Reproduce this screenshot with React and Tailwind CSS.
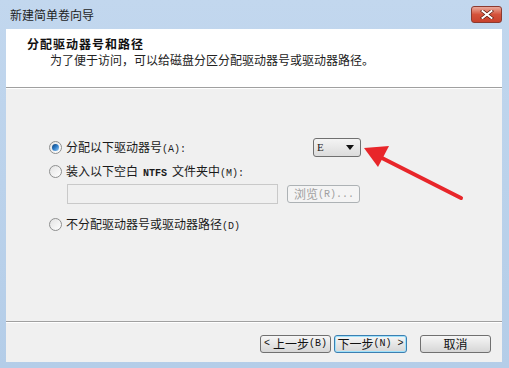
import React from "react";

const font = { fontFamily: '"Noto Sans CJK SC", "Liberation Sans", sans-serif' };

// half-width latin parts, SimSun-like 6px advance
const A = ({ children, className = "" }) => (
    <span className={"font-['Liberation_Mono'] text-[10px] " + className}>{children}</span>
);

const Radio = ({ checked }) => (
    <span className="relative flex h-[13px] w-[13px] shrink-0 items-center justify-center rounded-full border border-[#8e8f8f] bg-gradient-to-br from-[#e3e3e3] to-[#ffffff]">
        {checked && (
            <span className="h-[7px] w-[7px] rounded-full bg-gradient-to-br from-[#0c3f75] via-[#2d7cc8] to-[#9ad0f5]" />
        )}
    </span>
);

const WinButton = ({ children, primary, className = "" }) => (
    <button
        className={
            "flex h-[18px] items-center justify-center rounded-[3px] border text-[12px] leading-none text-[#111] bg-gradient-to-b from-[#f6f6f6] via-[#e6e6e6] to-[#d6d6d6] " +
            (primary ? "border-[#3c7fb1] shadow-[inset_0_0_0_1px_#9ee1fb] " : "border-[#707070] ") +
            className
        }
    >
        {children}
    </button>
);

export default function App() {
    return (
        <div
            className="relative flex h-[368px] w-[509px] flex-col overflow-hidden bg-gradient-to-b from-[#c2d7ee] to-[#b4cde8]"
            style={font}
        >
            <div className="flex h-[29px] shrink-0 items-center justify-between pl-[10px] pr-[7px]">
                <span className="text-[12px] text-[#1e1e1e]">新建简单卷向导</span>
                <div className="flex h-[17px] w-[31px] items-center justify-center rounded-[3px] border border-[#8b3a30] bg-gradient-to-b from-[#e9a99c] via-[#d4523b] to-[#c8412d]">
                    <svg width="14" height="9" viewBox="0 0 14 9">
                        <path d="M2.5 1 L11.5 8 M11.5 1 L2.5 8" stroke="#5a1a10" strokeWidth="3.4" strokeLinecap="square" />
                        <path d="M2.5 1 L11.5 8 M11.5 1 L2.5 8" stroke="#fff" strokeWidth="2" strokeLinecap="square" />
                    </svg>
                </div>
            </div>

            <div className="ml-[6px] mr-[7px] flex flex-1 flex-col">
                <div className="h-[58px] shrink-0 bg-white pl-[21px] pt-[7px]">
                    <div className="text-[12px] font-bold leading-[16px] tracking-[1px] text-[#111]">分配驱动器号和路径</div>
                    <div className="pl-[23px] text-[12px] leading-[16px] text-[#222]">
                        为了便于访问，可以给磁盘分区分配驱动器号或驱动器路径。
                    </div>
                </div>
                <div className="h-[2px] shrink-0 border-t border-[#a0a0a0] bg-white" />

                <div className="flex flex-1 flex-col bg-[#f0f0f0] pl-[43px] pt-[48px] text-[12px] text-[#1a1a1a]">
                    <div className="flex h-[20px] items-center">
                        <div className="flex w-[264px] items-center gap-[4px]">
                            <Radio checked />
                            <span>分配以下驱动器号<A>(A):</A></span>
                        </div>
                        <div className="flex h-[19px] w-[48px] items-center justify-between rounded-[3px] border border-[#707070] bg-gradient-to-b from-[#f4f4f4] to-[#dcdcdc] pl-[3px] pr-[6px]">
                            <span className="font-['Liberation_Serif'] text-[11px]">E</span>
                            <svg width="8" height="5" viewBox="0 0 8 5">
                                <path d="M0 0 H8 L4 5 Z" fill="#111" />
                            </svg>
                        </div>
                    </div>
                    <div className="mt-[6px] flex h-[16px] items-center gap-[4px]">
                        <Radio />
                        <span>
                            装入以下空白<A className="mx-[5px] font-bold">NTFS</A>文件夹中<A>(M):</A>
                        </span>
                    </div>
                    <div className="mt-[5px] flex items-center pl-[18px]">
                        <div className="h-[20px] w-[211px] border border-[#c9c9c9] bg-[#f0f0f0]" />
                        <div className="ml-[9px] flex h-[18px] w-[73px] items-center rounded-[3px] border border-[#adb2b5] bg-[#f4f4f4] pl-[6px] text-[12px] text-[#a0a0a0]">
                            浏览<A>(R)...</A>
                        </div>
                    </div>
                    <div className="mt-[12px] flex h-[16px] items-center gap-[4px]">
                        <Radio />
                        <span>不分配驱动器号或驱动器路径<A>(D)</A></span>
                    </div>
                </div>

                <div className="h-[2px] shrink-0 border-t border-[#a0a0a0] bg-white" />
                <div className="flex h-[39px] shrink-0 items-center justify-end bg-[#f0f0f0] pr-[11px] pt-[2px]">
                    <WinButton className="w-[71px]"><A className="mr-[3px]">&lt;</A>上一步<A>(B)</A></WinButton>
                    <WinButton primary className="ml-[3px] w-[73px]">下一步<A>(N)</A><A className="ml-[6px]">&gt;</A></WinButton>
                    <WinButton className="ml-[13px] w-[71px]">取消</WinButton>
                </div>
            </div>
            <div className="h-[6px] shrink-0" />

            <svg className="absolute left-0 top-0" width="509" height="368" viewBox="0 0 509 368">
                <line x1="461" y1="198" x2="380" y2="157" stroke="#e8262a" strokeWidth="4" strokeLinecap="round" />
                <path d="M364 148 L389 146 L378 167 Z" fill="#e8262a" />
            </svg>
        </div>
    );
}
